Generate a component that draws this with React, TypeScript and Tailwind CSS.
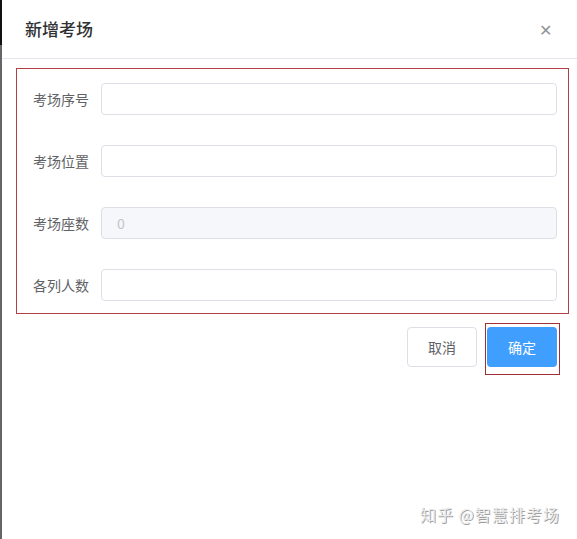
import React from 'react';

const rows = [
  { label: '考场序号', value: '', disabled: false },
  { label: '考场位置', value: '', disabled: false },
  { label: '考场座数', value: '0', disabled: true },
  { label: '各列人数', value: '', disabled: false },
];

export default function App() {
  return (
    <div
      className="relative h-[539px] w-[577px] overflow-hidden bg-white"
      style={{ fontFamily: '"Noto Sans CJK SC", "Noto Sans", sans-serif' }}
    >
      {/* left edge of page behind the dialog */}
      <div className="absolute left-0 top-0 h-[45px] w-[2px] bg-[#111]" />
      <div className="absolute left-0 top-[45px] bottom-0 w-[2px] bg-[#666]" />

      {/* Header */}
      <div className="flex h-[58px] items-center justify-between pl-[25px] pr-[25px]">
        <h2 className="text-[17px] font-medium text-[#303133]">新增考场</h2>
        <span className="text-[16px] font-light leading-none text-[#909399]">✕</span>
      </div>
      <div className="ml-[2px] h-px bg-[#e4e7ed]" />

      {/* Form */}
      <div className="mx-[16px] mt-[9px] h-[246px] w-[553px] border border-[#b04048] pt-[14px]">
        <div className="flex flex-col gap-[30px]">
          {rows.map((row) => (
            <div key={row.label} className="flex items-center">
              <label className="w-[84px] shrink-0 pl-[16px] text-[14px] text-[#606266]">
                {row.label}
              </label>
              <div
                className={`flex h-[32px] w-[456px] items-center rounded-[4px] border border-[#dcdfe6] px-[15px] text-[14px] ${
                  row.disabled ? 'bg-[#f5f7fa] text-[#c0c4cc]' : 'bg-white'
                }`}
              >
                {row.value}
              </div>
            </div>
          ))}
        </div>
      </div>

      {/* Footer */}
      <div className="mt-[9px] flex items-start justify-end gap-[8px] pr-[17px]">
        <button className="mt-[4px] h-[40px] w-[70px] rounded-[4px] border border-[#dcdfe6] bg-white text-[14px] text-[#606266]">
          取消
        </button>
        <div className="border border-[#a03038] pb-[7px] pl-[1px] pr-[2px] pt-[3px]">
          <button className="h-[40px] w-[70px] rounded-[4px] bg-[#409eff] text-[14px] text-white">
            确定
          </button>
        </div>
      </div>

      {/* watermark */}
      <div
        className="absolute left-[420px] top-[502px] text-[16px] tracking-[1px] text-[#ececec]"
        style={{ textShadow: '1px 1px 0 #a0a0a0' }}
      >
        知乎 @智慧排考场
      </div>
    </div>
  );
}
